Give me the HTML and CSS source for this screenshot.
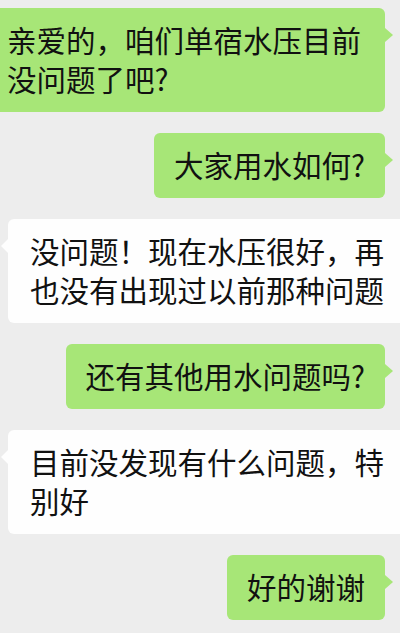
FILE: index.html
```html
<!DOCTYPE html>
<html lang="zh-CN">
<head>
<meta charset="utf-8">
<title>聊天</title>
<link rel="stylesheet" href="styles.css">
</head>
<body>
<div class="chat">
  <div class="row row-me"><div class="bubble bubble-me">亲爱的，咱们单宿水压目前没问题了吧?</div></div>
  <div class="row row-me"><div class="bubble bubble-me">大家用水如何?</div></div>
  <div class="row row-them"><div class="bubble bubble-them">没问题！现在水压很好，再也没有出现过以前那种问题</div></div>
  <div class="row row-me"><div class="bubble bubble-me">还有其他用水问题吗?</div></div>
  <div class="row row-them"><div class="bubble bubble-them">目前没发现有什么问题，特别好</div></div>
  <div class="row row-me"><div class="bubble bubble-me">好的谢谢</div></div>
</div>
</body>
</html>
```
FILE: styles.css
```css
html, body {
  margin: 0;
  padding: 0;
  width: 400px;
  height: 633px;
  overflow: hidden;
  background: #ededed;
}

.chat {
  display: flex;
  flex-direction: column;
  gap: 21px;
  padding-top: 8px;
  font-family: "Noto Sans CJK SC", "Noto Sans", sans-serif;
  font-size: 29.5px;
  line-height: 39px;
  color: #111111;
}

.row {
  display: flex;
}

.row-me {
  justify-content: flex-end;
  padding-right: 15px;
}

.row-them {
  justify-content: flex-start;
  padding-left: 8px;
}

.bubble {
  position: relative;
  flex-shrink: 0;
  box-sizing: border-box;
  max-width: 398px;
  padding: 12px 20px 14px;
  border-radius: 6px;
}

.bubble-me {
  background: #a7e677;
}

.bubble-them {
  background: #fefefe;
  padding-left: 22px;
}

.bubble::after {
  content: "";
  position: absolute;
  top: 20px;
  width: 0;
  height: 0;
  border-top: 7px solid transparent;
  border-bottom: 7px solid transparent;
}

.bubble-me::after {
  right: -8px;
  border-left: 8px solid #a7e677;
}

.bubble-them::after {
  left: -7px;
  border-right: 7px solid #fefefe;
}
```
